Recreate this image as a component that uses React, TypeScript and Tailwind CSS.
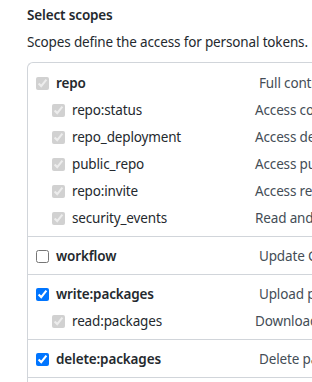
const groups = [
  {
    name: 'repo',
    desc: 'Full control of private repositories',
    checked: true,
    disabled: true,
    subs: [
      { name: 'repo:status', desc: 'Access commit status' },
      { name: 'repo_deployment', desc: 'Access deployment status' },
      { name: 'public_repo', desc: 'Access public repositories' },
      { name: 'repo:invite', desc: 'Access repository invitations' },
      { name: 'security_events', desc: 'Read and write security events' },
    ],
  },
  { name: 'workflow', desc: 'Update GitHub Action workflows', checked: false, disabled: false, subs: [] },
  {
    name: 'write:packages',
    desc: 'Upload packages to GitHub Package Registry',
    checked: true,
    disabled: false,
    subs: [{ name: 'read:packages', desc: 'Download packages from GitHub Package Registry' }],
  },
  { name: 'delete:packages', desc: 'Delete packages from GitHub Package Registry', checked: true, disabled: false, subs: [] },
  { name: 'admin:org', desc: 'Full control of orgs and teams, read and write org projects', checked: false, disabled: false, subs: [] },
];

export default function App() {
  return (
    <div
      className="w-[312px] h-[382px] overflow-hidden bg-white text-[#24292e] text-[13.5px] tracking-[-0.15px]"
      style={{ fontFamily: '"Segoe UI", "Noto Sans", "Liberation Sans", sans-serif' }}
    >
      <div className="pl-[27px] pt-[5px] w-[600px]">
        <h3 className="font-semibold leading-[21px]">Select scopes</h3>
        <p className="mt-[6px] leading-[21px] whitespace-nowrap">
          Scopes define the access for personal tokens. Read more about OAuth scopes.
        </p>

        <ul className="mt-[9px] border-t border-l border-[#d1d5da] rounded-tl-[6px]">
          {groups.map((g, i) => (
            <li
              key={g.name}
              className={`pb-[8px] ${i === 0 ? 'pt-[10px]' : 'pt-[9px] border-t border-[#d1d5da]'}`}
            >
              <div className="flex items-center h-[20px] pl-[8px]">
                <input
                  type="checkbox"
                  checked={g.checked}
                  disabled={g.disabled}
                  readOnly
                  className="m-0 w-[13px] h-[13px] shrink-0"
                />
                <span className="w-[210px] shrink-0 pl-[7px] font-semibold whitespace-nowrap">{g.name}</span>
                <span className="whitespace-nowrap text-[#444d56]">{g.desc}</span>
              </div>
              {g.subs.map((s) => (
                <div key={s.name} className="flex items-center h-[20px] mt-[7px] pl-[24px]">
                  <input type="checkbox" checked disabled readOnly className="m-0 w-[13px] h-[13px] shrink-0" />
                  <span className="w-[190px] shrink-0 pl-[7px] whitespace-nowrap">{s.name}</span>
                  <span className="whitespace-nowrap text-[#444d56]">{s.desc}</span>
                </div>
              ))}
            </li>
          ))}
        </ul>
      </div>
    </div>
  );
}
